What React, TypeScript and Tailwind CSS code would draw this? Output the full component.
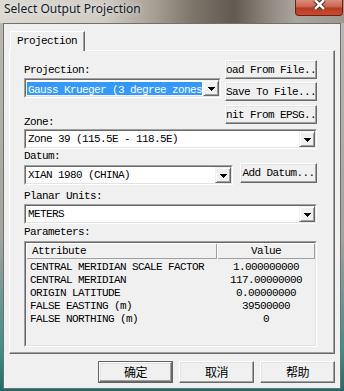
import React from 'react';

const raised =
  'bg-[#f0f0f0] border border-t-white border-l-white border-r-[#696969] border-b-[#696969] shadow-[inset_-1px_-1px_#a0a0a0,inset_1px_1px_#e3e3e3]';

const Arrow = () => (
  <div className="w-[16px] h-[16px] shrink-0 flex items-center justify-center pt-[1px] bg-[#f0f0f0] border border-t-[#f0f0f0] border-l-[#f0f0f0] border-r-[#696969] border-b-[#696969] shadow-[inset_1px_1px_#ffffff,inset_-1px_-1px_#a0a0a0]">
    <svg width="7" height="4" shapeRendering="crispEdges">
      <rect x="0" y="0" width="7" height="1" fill="#000" />
      <rect x="1" y="1" width="5" height="1" fill="#000" />
      <rect x="2" y="2" width="3" height="1" fill="#000" />
      <rect x="3" y="3" width="1" height="1" fill="#000" />
    </svg>
  </div>
);

const Combo = ({ children, className = '' }: { children: React.ReactNode; className?: string }) => (
  <div className={`h-[20px] border border-t-[#a0a0a0] border-l-[#a0a0a0] border-r-white border-b-white ${className}`}>
    <div className="h-full flex bg-white border border-t-[#696969] border-l-[#696969] border-r-[#e3e3e3] border-b-[#e3e3e3]">
      <div className="flex-1 min-w-0 overflow-hidden whitespace-nowrap">{children}</div>
      <Arrow />
    </div>
  </div>
);

// text wider than the button is clipped on both sides, as in the dialog
const Button = ({ label, className = '' }: { label: string; className?: string }) => (
  <div className={`flex items-center justify-center overflow-hidden whitespace-nowrap pt-[1px] ${raised} ${className}`}>
    <span>{label}</span>
  </div>
);

const params = [
  { name: 'CENTRAL MERIDIAN SCALE FACTOR', value: '1.000000000' },
  { name: 'CENTRAL MERIDIAN', value: '117.00000000' },
  { name: 'ORIGIN LATITUDE', value: '0.00000000' },
  { name: 'FALSE EASTING (m)', value: '39500000' },
  { name: 'FALSE NORTHING (m)', value: '0' },
];

const DialogButton = ({ label, isDefault }: { label: string; isDefault?: boolean }) => (
  <div className={`w-[75px] h-[22px] ${isDefault ? 'border border-[#646464]' : ''}`}>
    <div className={`h-full flex items-center justify-center ${raised}`}>
      <span className="font-['Noto_Sans_CJK_SC',sans-serif] text-[12px] leading-[14px] text-black">{label}</span>
    </div>
  </div>
);

export default function App() {
  return (
    <div className="w-[344px] h-[391px] overflow-hidden flex flex-col bg-[linear-gradient(to_bottom,#bdb8b0,#a3a59f_60%,#3f8d88_90%,#1d6a66)]">
      <div className="h-[23px] shrink-0 flex items-start bg-[linear-gradient(to_right,#dcd9d3_0%,#d0ccc5_30%,#a59e93_45%,#7f786d_55%,#615a50_68%,#8e887f_78%,#aaa59d_86%,#9e988f_100%)]">
        <span className="pl-[4px] pt-[1px] font-['Noto_Sans',sans-serif] text-[12px] leading-[16px] text-[#15202b] [text-shadow:0_0_6px_rgba(255,255,255,0.8)]">
          Select Output Projection
        </span>
        <div className="ml-auto mr-[1px] w-[48px] h-[16px] flex justify-center rounded-b-[4px] border border-t-0 border-[#6b2014] bg-[linear-gradient(to_bottom,#dc8d7d_0%,#cb634d_45%,#b73b23_55%,#c94a2e_100%)]">
          <svg width="15" height="11" viewBox="0 0 15 11" className="-mt-[1px]">
            <path d="M3 1 L12 10 M12 1 L3 10" stroke="#4d1a12" strokeWidth="4.5" />
            <path d="M3 1 L12 10 M12 1 L3 10" stroke="#ffffff" strokeWidth="2.5" />
          </svg>
        </div>
      </div>

      <div className="mx-[3px] mb-[2px] flex-1 flex flex-col border border-[#707070] bg-[#f0f0f0] pt-[7px] px-[5px] font-['Liberation_Mono',monospace] text-[11px] tracking-[-0.6px] leading-[13px] text-black">
        {/* tab header */}
        <div className="relative z-10 ml-[1px] -mb-[1px] w-[75px] h-[20px] pt-[3px] pl-[6px] bg-[#f0f0f0] border-t border-l border-r border-t-white border-l-white border-r-[#696969] shadow-[inset_-1px_0_#a0a0a0]">
          Projection
        </div>

        {/* tab panel */}
        <div className="h-[304px] flex flex-col pt-[9px] pl-[14px] pr-[17px] border border-t-white border-l-white border-r-[#696969] border-b-[#696969] shadow-[inset_-1px_-1px_#a0a0a0]">
          <div className="flex items-start gap-[4px]">
            <div className="w-[197px] flex flex-col">
              <div className="mt-[4px]">Projection:</div>
              <Combo className="mt-[1px]">
                <div className="mt-[2px] mx-[1px] h-[13px] pl-[1px] pt-[3px] leading-[11px] bg-[#3399ff] text-white">
                  Gauss Krueger (3 degree zones)
                </div>
              </Combo>
              <div className="mt-[18px]">Zone:</div>
            </div>
            <div className="w-[92px] flex flex-col">
              <Button label="Load From File..." className="h-[19px]" />
              <Button label="Save To File..." className="h-[19px] mt-[3px]" />
              <Button label="Init From EPSG..." className="h-[19px] mt-[4px]" />
            </div>
          </div>

          <Combo>
            <div className="pl-[2px] pt-[2px]">Zone 39 (115.5E - 118.5E)</div>
          </Combo>

          <div className="mt-[1px]">Datum:</div>
          <div className="flex items-start gap-[7px]">
            <Combo className="w-[209px] mt-[2px]">
              <div className="pl-[2px] pt-[2px]">XIAN 1980 (CHINA)</div>
            </Combo>
            <Button label="Add Datum..." className="w-[77px] h-[20px]" />
          </div>

          <div className="mt-[5px]">Planar Units:</div>
          <Combo className="mt-[1px]">
            <div className="pl-[2px] pt-[2px]">METERS</div>
          </Combo>

          <div className="mt-[2px]">Parameters:</div>
          <div className="mt-[2px] h-[106px] border border-t-[#a0a0a0] border-l-[#a0a0a0] border-r-white border-b-white">
            <div className="h-full flex flex-col border border-t-[#696969] border-l-[#696969] border-r-[#e3e3e3] border-b-[#e3e3e3] bg-[#f0f0f0]">
              <div className="h-[16px] flex shrink-0">
                <div className="w-[191px] pl-[6px] pt-[2px] bg-[#f0f0f0] shadow-[inset_1px_1px_#ffffff,inset_-1px_-1px_#a0a0a0]">
                  Attribute
                </div>
                <div className="flex-1 flex justify-center pt-[2px] bg-[#f0f0f0] shadow-[inset_1px_1px_#ffffff,inset_-1px_-1px_#a0a0a0]">
                  Value
                </div>
              </div>
              <div className="pt-[2px] flex flex-col">
                {params.map((p) => (
                  <div key={p.name} className="flex h-[13px]">
                    <div className="w-[191px] pl-[4px] whitespace-nowrap overflow-hidden">{p.name}</div>
                    <div className="flex-1 text-center">{p.value}</div>
                  </div>
                ))}
              </div>
            </div>
          </div>
        </div>

        <div className="mt-[7px] flex justify-end gap-[6px]">
          <DialogButton label="确定" isDefault />
          <DialogButton label="取消" />
          <DialogButton label="帮助" />
        </div>
      </div>
    </div>
  );
}
